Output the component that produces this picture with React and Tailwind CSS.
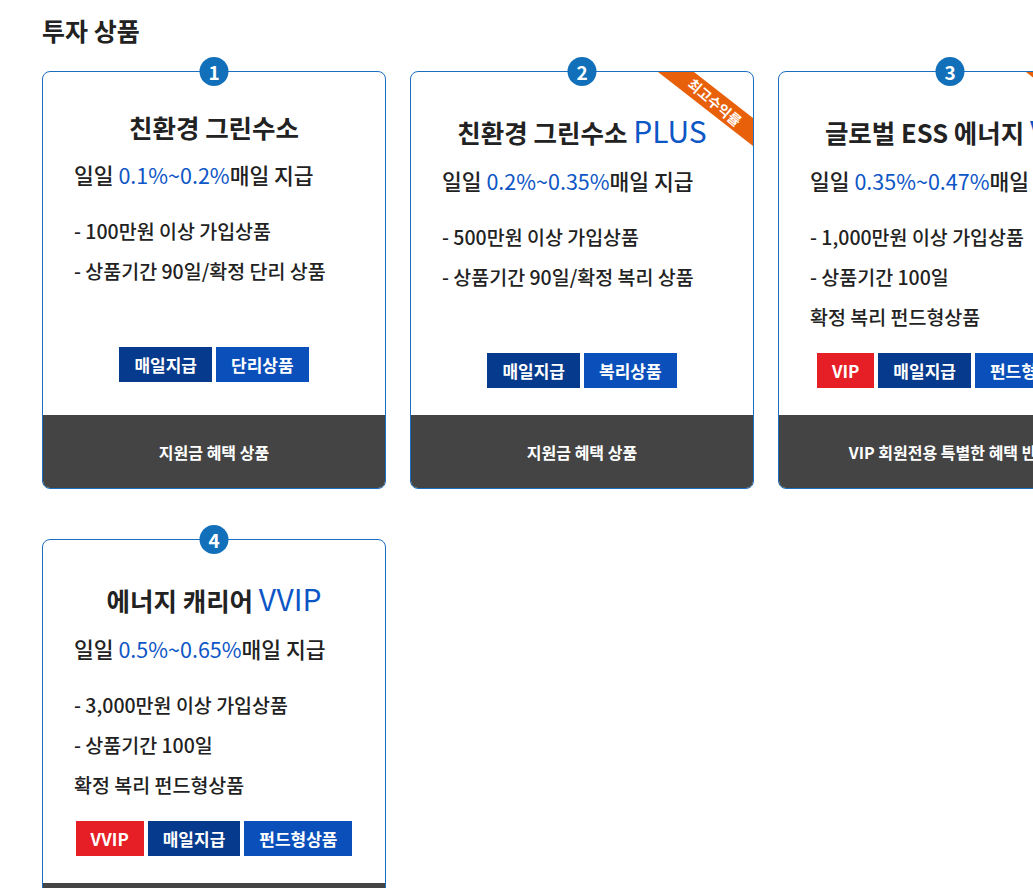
import React from "react";

const cards = [
  {
    num: 1,
    title: "친환경 그린수소",
    suffix: null,
    rate: "0.1%~0.2%",
    lines: ["- 100만원 이상 가입상품", "- 상품기간 90일/확정 단리 상품"],
    tags: [
      ["매일지급", "navy"],
      ["단리상품", "blue"],
    ],
    footer: "지원금 혜택 상품",
    ribbon: false,
  },
  {
    num: 2,
    title: "친환경 그린수소",
    suffix: "PLUS",
    rate: "0.2%~0.35%",
    lines: ["- 500만원 이상 가입상품", "- 상품기간 90일/확정 복리 상품"],
    tags: [
      ["매일지급", "navy"],
      ["복리상품", "blue"],
    ],
    footer: "지원금 혜택 상품",
    ribbon: true,
  },
  {
    num: 3,
    title: "글로벌 ESS 에너지",
    suffix: "VIP",
    rate: "0.35%~0.47%",
    lines: ["- 1,000만원 이상 가입상품", "- 상품기간 100일", "확정 복리 펀드형상품"],
    tags: [
      ["VIP", "red"],
      ["매일지급", "navy"],
      ["펀드형상품", "blue"],
    ],
    footer: "VIP 회원전용 특별한 혜택 반영",
    ribbon: true,
  },
  {
    num: 4,
    title: "에너지 캐리어",
    suffix: "VVIP",
    rate: "0.5%~0.65%",
    lines: ["- 3,000만원 이상 가입상품", "- 상품기간 100일", "확정 복리 펀드형상품"],
    tags: [
      ["VVIP", "red"],
      ["매일지급", "navy"],
      ["펀드형상품", "blue"],
    ],
    footer: "VVIP 회원전용 특별한 혜택 반영",
    ribbon: false,
  },
];

const tagColor = {
  navy: "bg-[#063a8c]",
  blue: "bg-[#0a4fba]",
  red: "bg-[#e61e25]",
};

function Card({ c }) {
  return (
    <div className="relative flex flex-col rounded-lg border border-[#1a6fc0] bg-white">
      <div className="absolute left-1/2 top-[-15px] flex h-[29px] w-[29px] -translate-x-1/2 items-center justify-center rounded-full bg-[#1170b9] text-[19px] font-bold leading-none text-white">
        {c.num}
      </div>
      {c.ribbon && (
        <div className="absolute right-0 top-0 h-[74px] w-[95px] rounded-tr-lg">
          <div className="absolute inset-0 bg-[#e8600a] [clip-path:polygon(0_0,36px_0,100%_46px,100%_100%)]" />
          <span className="absolute left-[57px] top-[30px] -translate-x-1/2 -translate-y-1/2 rotate-[40deg] whitespace-nowrap text-[14px] font-bold leading-none text-white">
            최고수익률
          </span>
        </div>
      )}
      <div className="flex flex-1 flex-col px-[31px] pb-[27px] pt-[37px]">
        <div className="whitespace-nowrap text-center text-[25.5px] font-bold leading-[36px] text-[#222]">
          {c.title}
          {c.suffix && (
            <>
              {" "}
              <span className="text-[30px] font-normal leading-[42px] text-[#0d56c6]">{c.suffix}</span>
            </>
          )}
        </div>
        <div className="mt-[15px] whitespace-nowrap text-[21.5px] font-medium leading-[30px] text-[#222]">
          일일 <span className="font-normal text-[#0d56c6]">{c.rate}</span>매일 지급
        </div>
        <div className="mt-[21px] h-[120px] whitespace-nowrap text-[19.5px] font-medium leading-[40px] text-[#222]">
          {c.lines.map((l, i) => (
            <div key={i}>{l}</div>
          ))}
        </div>
        <div className="mt-[16px] flex justify-center gap-[4px]">
          {c.tags.map(([t, col], i) => (
            <span
              key={i}
              className={`flex h-[35px] items-center whitespace-nowrap px-[15px] text-[17px] font-bold text-white ${tagColor[col]}`}
            >
              {t}
            </span>
          ))}
        </div>
      </div>
      <div className="flex h-[73px] items-center justify-center whitespace-nowrap rounded-b-[7px] bg-[#444444] text-[16px] font-bold text-white">
        {c.footer}
      </div>
    </div>
  );
}

export default function App() {
  return (
    <div
      className="h-screen w-screen overflow-hidden bg-white"
      style={{ fontFamily: '"Noto Sans CJK KR", "Noto Sans", sans-serif' }}
    >
      <div className="pl-[42px] pt-[16px]">
        <h2 className="text-[25px] font-bold leading-[28px] text-[#222]">투자 상품</h2>
        <div className="mt-[27px] grid w-[1080px] grid-cols-[repeat(3,344px)] gap-x-[24px] gap-y-[50px]">
          {cards.map((c) => (
            <Card key={c.num} c={c} />
          ))}
        </div>
      </div>
    </div>
  );
}
